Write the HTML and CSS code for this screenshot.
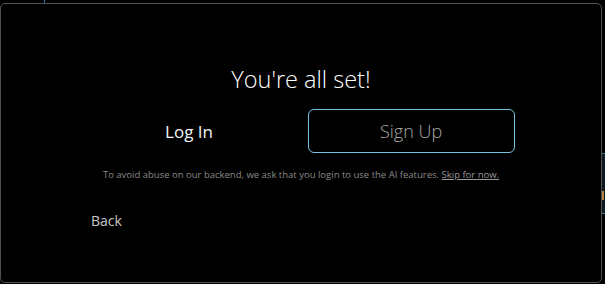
FILE: index.html
```html
<!DOCTYPE html>
<html>
<head>
<meta charset="utf-8">
<link rel="stylesheet" href="styles.css">
</head>
<body>
<div class="tick-top"></div>
<div class="side-panel"><span class="side-mark"></span></div>
<div class="dialog">
  <h1 class="title">You're all set!</h1>
  <div class="actions">
    <button class="btn btn-login">Log In</button>
    <button class="btn btn-signup">Sign Up</button>
  </div>
  <p class="note">To avoid abuse on our backend, we ask that you login to use the AI features. <a class="skip" href="#">Skip for now.</a></p>
  <div class="back-row"><button class="back">Back</button></div>
</div>
</body>
</html>
```

FILE: styles.css
```css
html, body {
  margin: 0;
  padding: 0;
  background: #000;
  width: 605px;
  height: 284px;
  overflow: hidden;
  font-family: "Open Sans", "Noto Sans", sans-serif;
}
body {
  position: relative;
  padding-top: 3px;
  box-sizing: border-box;
}
.tick-top {
  position: absolute;
  left: 44px;
  top: 0;
  width: 1px;
  height: 3px;
  background: #2f7f96;
}
.side-panel {
  position: absolute;
  left: 602px;
  top: 153px;
  width: 3px;
  height: 61px;
  background: #0f1a1e;
  border-top: 1px solid #3a7f90;
  border-bottom: 1px solid #3a7f90;
  box-sizing: border-box;
}
.side-mark {
  position: absolute;
  left: 0;
  top: 37px;
  width: 2px;
  height: 9px;
  background: #b08040;
}
.dialog {
  width: 602px;
  height: 280px;
  box-sizing: border-box;
  border: 1px solid #505050;
  border-radius: 5px;
  background: #000;
  display: flex;
  flex-direction: column;
  align-items: center;
  padding-top: 59px;
}
.title {
  margin: 0;
  font-weight: 300;
  font-size: 23.5px;
  line-height: 32px;
  color: #ffffff;
}
.actions {
  margin-top: 14px;
  margin-left: -2px;
  display: flex;
  gap: 15px;
}
.btn {
  width: 207px;
  height: 44px;
  background: transparent;
  border: 1px solid transparent;
  border-radius: 6px;
  font-family: inherit;
  font-size: 17px;
  padding: 0;
  cursor: pointer;
}
.btn-login {
  color: #f4f4f4;
}
.btn-signup {
  border-color: #72c3df;
  color: #a8a8a8;
  font-size: 18px;
  font-weight: 300;
}
.note {
  margin: 15px 0 0;
  font-size: 9.5px;
  color: #8a8a8a;
}
.skip {
  color: #9a9a9a;
}
.back-row {
  align-self: stretch;
  padding-left: 90px;
  margin-top: 28px;
}
.back {
  background: transparent;
  border: none;
  padding: 0;
  font-family: inherit;
  font-size: 14px;
  color: #c8c8c8;
}
```
